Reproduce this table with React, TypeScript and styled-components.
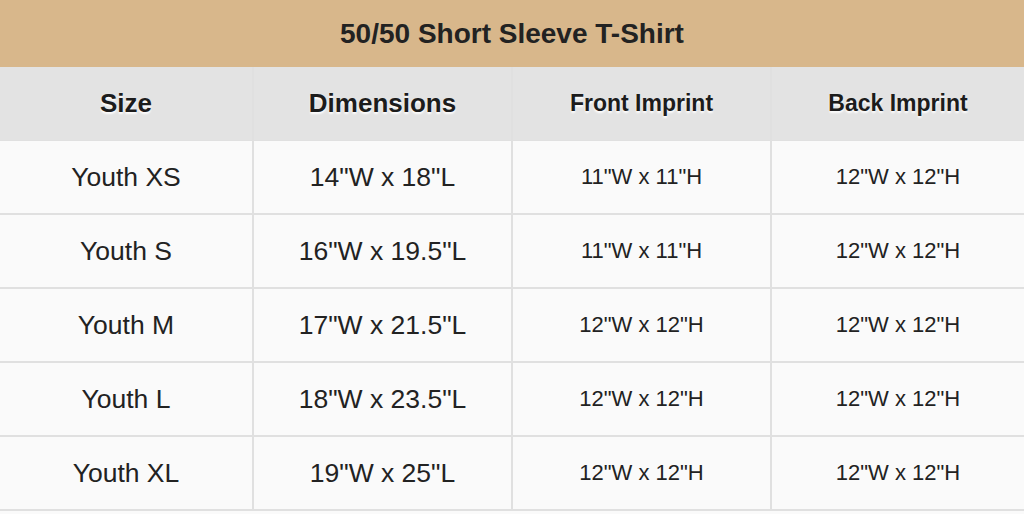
import styled, { createGlobalStyle } from 'styled-components';

const GlobalStyle = createGlobalStyle`
  html, body {
    margin: 0;
    padding: 0;
    background: #fafafa;
  }
  body {
    font-family: "Liberation Sans", Arial, sans-serif;
    color: #222;
  }
`;

const StyledChart = styled.section`
  width: 1024px;
`;

const StyledTitle = styled.h1`
  align-items: center;
  background-color: #d8b78b;
  color: #222;
  display: flex;
  font-size: 28px;
  font-weight: 700;
  height: 67px;
  justify-content: center;
  margin: 0;
`;

const StyledGrid = styled.div`
  background-color: #e0e0e0;
  display: grid;
  gap: 2px;
  grid-template-columns: 252px 257px 257px 252px;
  grid-auto-rows: 72px;
  padding-bottom: 2px;
`;

const StyledHead = styled.div<{ $small?: boolean }>`
  align-items: center;
  background-color: #e3e3e3;
  color: #1c1c1c;
  display: flex;
  font-size: ${({ $small }) => ($small ? '23px' : '26px')};
  font-weight: 700;
  height: 73px;
  justify-content: center;
  text-shadow: 0 2px 2px rgba(255, 255, 255, 0.95);
`;

const StyledCell = styled.div<{ $small?: boolean }>`
  align-items: center;
  background-color: #fafafa;
  color: #222;
  display: flex;
  font-size: ${({ $small }) => ($small ? '22px' : '26.5px')};
  justify-content: center;
`;

type SizeRow = {
  size: string;
  dimensions: string;
  front: string;
  back: string;
};

const rows: SizeRow[] = [
  { size: 'Youth XS', dimensions: '14"W x 18"L', front: '11"W x 11"H', back: '12"W x 12"H' },
  { size: 'Youth S', dimensions: '16"W x 19.5"L', front: '11"W x 11"H', back: '12"W x 12"H' },
  { size: 'Youth M', dimensions: '17"W x 21.5"L', front: '12"W x 12"H', back: '12"W x 12"H' },
  { size: 'Youth L', dimensions: '18"W x 23.5"L', front: '12"W x 12"H', back: '12"W x 12"H' },
  { size: 'Youth XL', dimensions: '19"W x 25"L', front: '12"W x 12"H', back: '12"W x 12"H' }
];

const App = (): JSX.Element => (
  <>
    <GlobalStyle />
    <StyledChart>
      <StyledTitle>50/50 Short Sleeve T-Shirt</StyledTitle>
      <StyledGrid>
        <StyledHead>Size</StyledHead>
        <StyledHead>Dimensions</StyledHead>
        <StyledHead $small>Front Imprint</StyledHead>
        <StyledHead $small>Back Imprint</StyledHead>
        {rows.map((row) => [
          <StyledCell key={`${row.size}-s`}>{row.size}</StyledCell>,
          <StyledCell key={`${row.size}-d`}>{row.dimensions}</StyledCell>,
          <StyledCell key={`${row.size}-f`} $small>{row.front}</StyledCell>,
          <StyledCell key={`${row.size}-b`} $small>{row.back}</StyledCell>
        ])}
      </StyledGrid>
    </StyledChart>
  </>
);

export default App;
